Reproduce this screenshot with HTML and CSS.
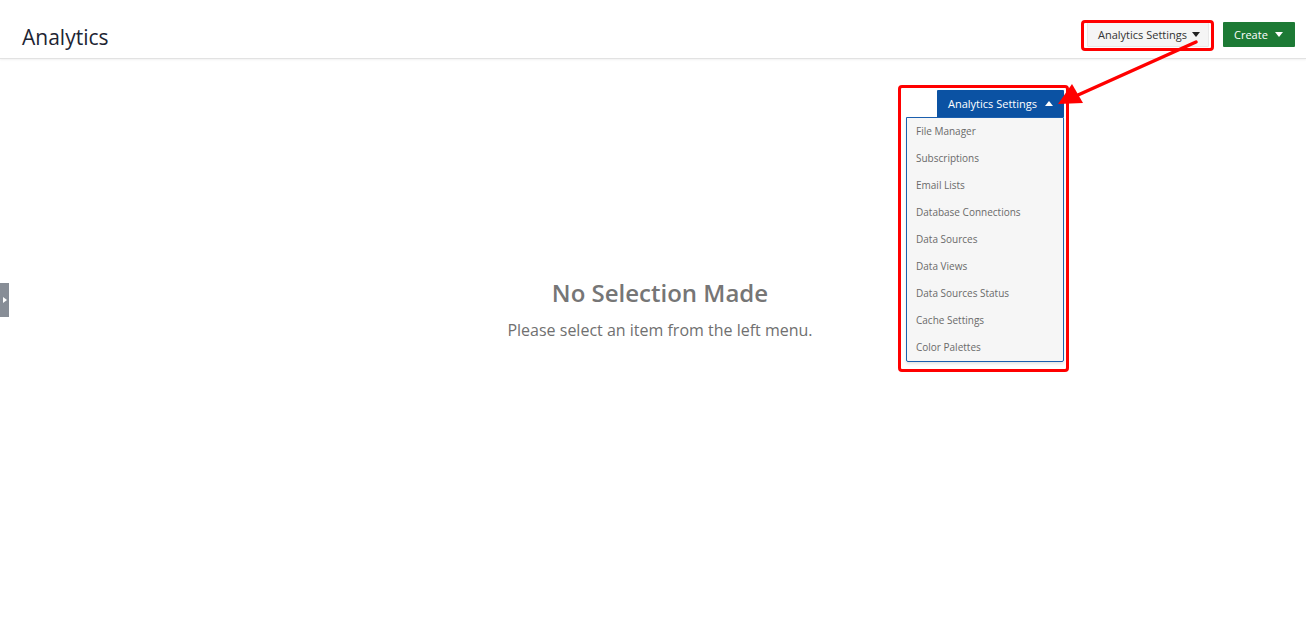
FILE: index.html
```html
<!DOCTYPE html>
<html lang="en">
<head>
    <meta charset="UTF-8">
    <title>Analytics</title>
    <link rel="stylesheet" href="styles.css">
</head>
<body>
    <div class="header">
        <h1 class="title">Analytics</h1>
        <div class="actions">
            <button class="btn btn-light">Analytics Settings <span class="caret"></span></button>
            <button class="btn btn-green">Create <span class="caret caret-white"></span></button>
        </div>
    </div>
    <div class="side-tab"><span class="tab-arrow"></span></div>
    <div class="content">
        <div class="empty">
            <h2 class="empty-title">No Selection Made</h2>
            <p class="empty-text">Please select an item from the left menu.</p>
        </div>
    </div>

    <div class="dropdown">
        <button class="btn btn-blue">Analytics Settings <span class="caret caret-up"></span></button>
        <ul class="menu">
            <li>File Manager</li>
            <li>Subscriptions</li>
            <li>Email Lists</li>
            <li>Database Connections</li>
            <li>Data Sources</li>
            <li>Data Views</li>
            <li>Data Sources Status</li>
            <li>Cache Settings</li>
            <li>Color Palettes</li>
        </ul>
    </div>

    <!-- annotation -->
    <div class="mark mark-top"></div>
    <div class="mark mark-menu"></div>
    <svg class="arrow" width="1306" height="622" viewBox="0 0 1306 622">
        <line x1="1196" y1="42" x2="1078" y2="95" stroke="#f00" stroke-width="3.5" stroke-linecap="round"/>
        <polygon points="1058,104 1072,84 1083,103" fill="#f00"/>
    </svg>
</body>
</html>
```

FILE: styles.css
```css
* {box-sizing: border-box;}
body {
    margin: 0;
    font-family: "Open Sans", sans-serif;
    background: #fff;
    height: 622px;
    overflow: hidden;
}
.header {
    display: flex;
    align-items: center;
    justify-content: space-between;
    height: 59px;
    padding: 0 11px 0 22px;
    border-bottom: 1px solid #e2e2e2;
    box-shadow: 0 1px 2px rgba(0,0,0,0.06);
}
.title {
    margin: 15px 0 0 0;
    font-size: 21px;
    font-weight: 400;
    color: #1d2433;
}
.actions {
    display: flex;
    gap: 14px;
    margin-top: 10px;
}
.btn {
    font-family: "Open Sans", sans-serif;
    font-size: 11px;
    height: 25px;
    border: 0;
    border-radius: 1px;
    padding: 0 10px 0 11px;
    display: flex;
    align-items: center;
    justify-content: space-between;
    white-space: nowrap;
}
.btn-light {
    background: #f5f5f5;
    color: #333;
    border: 1px solid #e8e8e8;
    width: 122px;
    padding: 0 8px 0 10px;
}
.btn-green {
    background: #1d7a35;
    color: #fff;
    padding: 0 12px 0 11px;
    width: 72px;
}
.btn-blue {
    background: #0b52a3;
    color: #fff;
    height: 27px;
    padding: 0 11px 0 11px;
    border-radius: 1px 1px 0 0;
    width: 127px;
}
.caret {
    width: 0;
    height: 0;
    border-left: 4px solid transparent;
    border-right: 4px solid transparent;
    border-top: 5px solid #222;
}
.caret-white {
    border-top-color: #fff;
}
.caret-up {
    border-top: 0;
    border-bottom: 5px solid #fff;
}
.side-tab {
    position: absolute;
    left: 0;
    top: 283px;
    width: 9px;
    height: 34px;
    background: #878d96;
    display: flex;
    align-items: center;
    justify-content: center;
}
.tab-arrow {
    width: 0;
    height: 0;
    border-top: 3px solid transparent;
    border-bottom: 3px solid transparent;
    border-left: 4px solid #fff;
}
.content {
    padding: 217px 0 0 14px;
}
.empty {
    text-align: center;
    color: #777;
}
.empty-title {
    margin: 0;
    font-size: 24px;
    font-weight: 600;
    color: #767676;
}
.empty-text {
    margin: 10px 0 0;
    font-size: 16px;
    color: #707070;
}
.dropdown {
    position: absolute;
    left: 906px;
    top: 90px;
    width: 158px;
    display: flex;
    flex-direction: column;
    align-items: flex-end;
}
.menu {
    list-style: none;
    margin: 0;
    padding: 0;
    width: 158px;
    background: #f6f6f6;
    border: 1px solid #1b5fae;
    border-radius: 0 0 2px 2px;
    box-shadow: 0 2px 3px rgba(0,0,0,0.1);
}
.menu li {
    font-size: 10px;
    color: #6a6a6a;
    height: 27px;
    line-height: 26px;
    padding-left: 9px;
}
.mark {
    position: absolute;
    border: 3.5px solid #f00;
    border-radius: 4px;
}
.mark-top {
    left: 1081px;
    top: 20px;
    width: 133px;
    height: 31px;
}
.mark-menu {
    left: 898px;
    top: 85px;
    width: 171px;
    height: 287px;
}
.arrow {
    position: absolute;
    left: 0;
    top: 0;
    pointer-events: none;
}
```
